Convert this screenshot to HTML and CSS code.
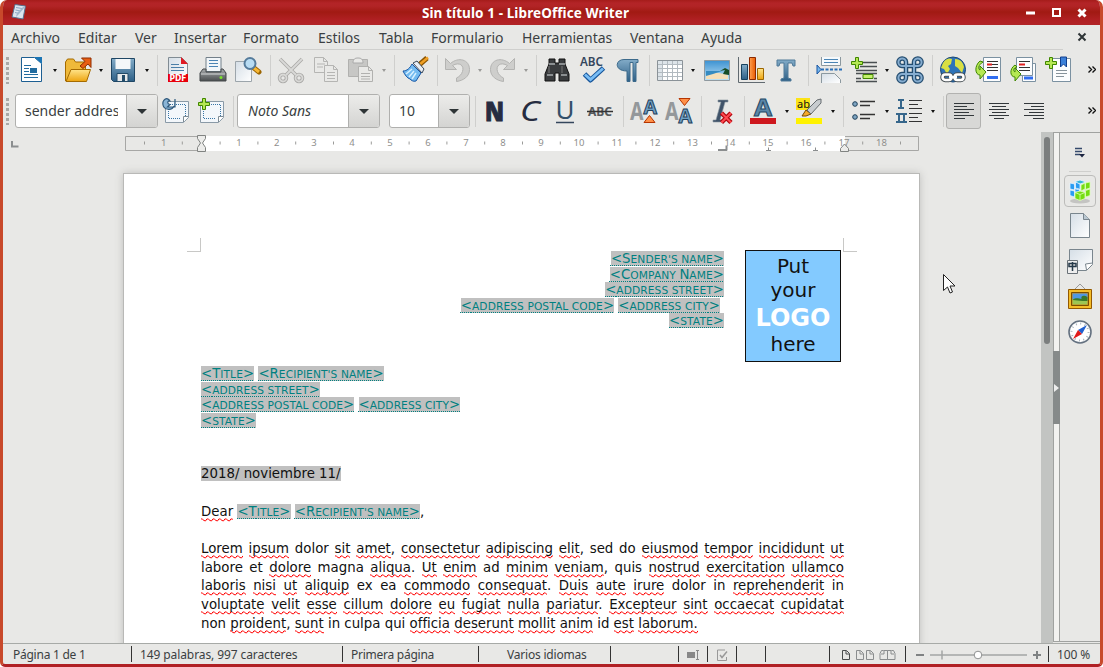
FILE: index.html
```html
<!DOCTYPE html>
<html lang="es">
<head>
<meta charset="utf-8">
<title>Sin título 1 - LibreOffice Writer</title>
<link rel="stylesheet" href="styles.css">
</head>
<body>
<svg width="0" height="0" class="defs">
  <defs>
    <linearGradient id="gBlue" x1="0" y1="0" x2="0" y2="1"><stop offset="0" stop-color="#83acc8"/><stop offset="1" stop-color="#2d5f86"/></linearGradient>
    <linearGradient id="gPage" x1="0" y1="0" x2="1" y2="1"><stop offset="0" stop-color="#d5dee6"/><stop offset="1" stop-color="#fff"/></linearGradient>
    <linearGradient id="gGold" x1="0" y1="0" x2="0" y2="1"><stop offset="0" stop-color="#ffe48a"/><stop offset="1" stop-color="#eda410"/></linearGradient>
    <linearGradient id="gOrange" x1="0" y1="0" x2="1" y2="0"><stop offset="0" stop-color="#ffa050"/><stop offset="1" stop-color="#e85a00"/></linearGradient>
    <linearGradient id="gMetal" x1="0" y1="0" x2="0" y2="1"><stop offset="0" stop-color="#a8abad"/><stop offset="1" stop-color="#4b4e50"/></linearGradient>
    <linearGradient id="gSky" x1="0" y1="0" x2="0" y2="1"><stop offset="0" stop-color="#3c92d2"/><stop offset="1" stop-color="#bfe2f5"/></linearGradient>
  </defs>
</svg>
<div class="window">
  <header class="titlebar">
    <svg class="app-icon" viewBox="0 0 16 16"><path d="M4 .5 14.500 2l-2.500 13L1 13z" fill="#dbe5ee" stroke="#55708f"/><path d="m5 3.500 6 1M4.500 6l5 1M4 8.500l4 1" stroke="#8aa6c4"/><path d="m14 3-6 7-3 3 1-4 6-6" fill="#9fb6cc"/></svg>
    <span class="title">Sin título 1 - LibreOffice Writer</span>
    <svg class="win-buttons" viewBox="0 0 66 16" fill="none" stroke="#fff" stroke-width="2"><path d="M2 8h9" stroke-width="3"/><path d="M29 4h7v7h-7z"/><path d="m54.500 4.500 7 7m0-7-7 7" stroke-width="3"/></svg>
  </header>
  <nav class="menubar">
    <span>Archivo</span><span>Editar</span><span>Ver</span><span>Insertar</span><span>Formato</span><span>Estilos</span><span>Tabla</span><span>Formulario</span><span>Herramientas</span><span>Ventana</span><span>Ayuda</span>
    <svg viewBox="0 0 10 10"><path d="m1.500 1.500 7 7m0-7-7 7" stroke="#2e3436" stroke-width="2"/></svg>
  </nav>
  <div class="rule"></div>

  <div class="toolbar">
    <i class="grip"></i>
    <b class="slot"><svg viewBox="0 0 28 28"><path d="M3.500 1.500h13l7 6v18h-20z" fill="#fff" stroke="#1d5f92"/><path d="m16 1 8 7V1z" fill="#1b75b5"/><path d="M6 9.500h7M6 12.500h5M6 15.500h5M6 18.500h14M6 21.500h14" stroke="#236c9f"/><path d="M12 12h7v5h-7z" fill="#236c9f"/></svg></b><i class="arr"></i>
    <b class="slot"><svg viewBox="0 0 28 28"><path d="M1.500 25V6l2-3h6l2 3h10v7" fill="#efb93a" stroke="#a56b00"/><path d="m2 25.500 5-12h19.500l-4 12z" fill="url(#gGold)" stroke="#a56b00"/><path d="m16 10 5-4.500-3.500-3.500h9.500v9.500l-3-3.500-5 4.500z" fill="#e85e12" stroke="#8f2d00"/></svg></b><i class="arr"></i>
    <b class="slot"><svg viewBox="0 0 28 28"><path d="M1.500 2.500h23v23h-21l-2-2z" fill="url(#gBlue)" stroke="#1f4664"/><path d="M5.500 3h15v10h-15z" fill="#f4f7f9"/><path d="M7 17.500h11v8H7z" fill="#e6e9ea" stroke="#234b68"/><path d="M12 19h3v6h-3z" fill="#234b68"/></svg></b><i class="arr"></i>
    <i class="sep"></i>
    <b class="slot"><svg viewBox="0 0 28 28"><path d="M4.500 1.500h13l6 6v18h-19z" fill="url(#gPage)" stroke="#818c94"/><path d="m17 1 7 7h-7z" fill="#e01b24"/><path d="M7 8.500h8M7 11.500h13M7 14.500h13" stroke="#4b7fa8"/><path d="M4 18h20v8H4z" fill="#e8000b"/><text x="14" y="25" text-anchor="middle" textLength="17" lengthAdjust="spacingAndGlyphs" class="t-pdf">PDF</text></svg></b>
    <b class="slot"><svg viewBox="0 0 28 28"><path d="M7 1.500h15v14H7z" fill="#f2f6f9" stroke="#73808a"/><path d="M10 4.500h9M10 7.500h9M10 10.500h9" stroke="#4b84b4"/><path d="m4 13-3 4v8h26v-8l-3-4h-2v3H7v-3z" fill="url(#gMetal)" stroke="#44484a"/><path d="M2 18h24" stroke="#d2d5d6"/><circle cx="22" cy="21.500" r="1.500" fill="#79e22a"/></svg></b>
    <b class="slot"><svg viewBox="0 0 28 28"><path d="M1.500 5.500h16v20h-16z" fill="url(#gPage)" stroke="#9ca5ab"/><path d="m20 12 5 4" stroke="#9c6500" stroke-width="5" stroke-linecap="round"/><path d="m20 12 5 4" stroke="#f7b733" stroke-width="3"/><circle cx="16" cy="7.500" r="5.500" fill="#b8dcf3" stroke="#557b9b" stroke-width="2"/></svg></b>
    <i class="sep"></i>
    <b class="slot"><svg viewBox="0 0 28 28" fill="none"><g stroke="#aaa9a7" stroke-width="3.500"><path d="M3 3 19 19M25 3 9 19"/><circle cx="6" cy="22" r="3.500"/><circle cx="22" cy="22" r="3.500"/></g><g stroke="#d9d9d7" stroke-width="1.800"><path d="M3 3 19 19M25 3 9 19"/><circle cx="6" cy="22" r="3.500"/><circle cx="22" cy="22" r="3.500"/></g></svg></b>
    <b class="slot"><svg viewBox="0 0 28 28"><g fill="#e9e9e7" stroke="#b5b5b3"><path d="M2.500 1.500h9l4 4v11h-13zM11.500 1.500v4h4M5 8h8M5 11h6"/><path d="M12.500 9.500h9l4 4v12h-13zM21.500 9.500v4h4M15 16.500h8M15 19.500h8M15 22.500h8"/></g></svg></b>
    <b class="slot"><svg viewBox="0 0 28 28"><path d="M1.500 3.500h19v17h-19z" fill="#c7c7c5" stroke="#b1b1af"/><path d="M6 7c0-4 2-5 5-5s5 1 5 5z" fill="#e8e8e6" stroke="#aaa"/><path d="M11.500 10.500h10l4 4v11h-14zM21.500 10.500v4h4M14 17.500h9M14 20.500h9M14 23h9" fill="#e9e9e7" stroke="#b1b1af"/></svg></b><i class="arr dim"></i>
    <i class="sep"></i>
    <b class="slot"><svg viewBox="0 0 28 28"><path d="m18 9 8-7" stroke="#8a5300" stroke-width="5"/><path d="m18 9 9-7.500" stroke="#f0a025" stroke-width="2.500"/><path d="m11 8 9 9-5 8c-3 1-5-1-6-2-3-1-5-4-7-8 4 0 7-3 9-7z" fill="#72baf0" stroke="#1957a5"/><path d="m11 13-6 5M13 15l-5 6M15 17l-4 6" stroke="#d7f0ff" stroke-width="1.500"/><path d="m12 7 4-2 7 8-2 4z" fill="#e9eef4" stroke="#39485b"/></svg></b>
    <i class="sep s7"></i>
    <b class="slot"><svg viewBox="0 0 28 28"><path d="M2.500 2.500v11h11l-4-4c7-4 12 0 10 6-1 3-3 5-6 6.500v3.500c7-1 13-5 13-12 0-10-11-13-19-6z" fill="#cececc" stroke="#b4b4b2"/></svg></b><i class="arr dim"></i>
    <b class="slot"><svg viewBox="0 0 28 28"><path d="M25.500 2.500v11h-11l4-4c-7-4-12 0-10 6 1 3 3 5 6 6.500v3.500c-7-1-13-5-13-12 0-10 11-13 19-6z" fill="#cececc" stroke="#b4b4b2"/></svg></b><i class="arr dim"></i>
    <i class="sep"></i>
    <b class="slot"><svg viewBox="0 0 28 28"><path d="M6 3h6v4h4V3h6v5l4 10v7H16v-8h-4v8H2v-7L6 8z" fill="#3a3c3e" stroke="#111"/><path d="M6 8h6M16 8h6M4 19h6M18 19h6" stroke="#a7abad" stroke-width="1.500"/><path d="M6 10v7M19 10v7" stroke="#777"/></svg></b>
    <b class="slot"><svg viewBox="0 0 28 28"><text x="13.500" y="10" text-anchor="middle" textLength="23" lengthAdjust="spacingAndGlyphs" class="t-abc">ABC</text><path d="m6.500 18 6 6L25.500 12" fill="none" stroke="#17559a" stroke-width="5" stroke-linejoin="round"/><path d="m7 18.500 5.500 5L25 12.500" fill="none" stroke="#79bdf5" stroke-width="2.800"/></svg></b>
    <b class="slot"><svg viewBox="0 0 28 28"><path d="M11 3.500h14v3h-2v19h-3v-19h-3v19h-3V15C1 15 2 3.500 11 3.500z" fill="url(#gBlue)" stroke="#3c6a8b"/></svg></b>
    <i class="sep"></i>
    <b class="slot"><svg viewBox="0 0 28 28"><path d="M1.500 4.500h25v20h-25z" fill="#fff" stroke="#8a9298"/><path d="M2 5h24v3H2zM2 8h4v16H2z" fill="#dde4e9"/><path d="M2 8.500h24M2 12.500h24M2 16.500h24M2 20.500h24M6.500 5v19M11.500 5v19M16.500 5v19M21.500 5v19" stroke="#b2bac0"/></svg></b><i class="arr"></i>
    <b class="slot"><svg viewBox="0 0 28 28"><path d="M2.500 4.500h25v20h-25z" fill="url(#gSky)" stroke="#8f999f"/><path d="M4 17c8-1 15 0 22 2v4H4z" fill="#f5dfb8"/><path d="M4 15h16l-9 3-7 2z" fill="#358bc1"/><path d="m21 18 2-4-5 1 5-3 4 2v5z" fill="#184d26"/></svg></b>
    <b class="slot"><svg viewBox="0 0 28 28"><path d="M1.500 1v25.500H28" fill="none" stroke="#616a70"/><path d="M4.500 8.500h6v15h-6z" fill="url(#gBlue)" stroke="#17415e"/><path d="M12.500 1.500h6v22h-6z" fill="url(#gOrange)" stroke="#8c2900"/><path d="M20.500 12.500h6v11h-6z" fill="url(#gGold)" stroke="#9b6500"/></svg></b>
    <b class="slot"><svg viewBox="0 0 28 28"><path d="M5 4h18v6h-2l-1-3h-4v15l3 1v2H9v-2l3-1V7H8l-1 3H5z" fill="url(#gBlue)" stroke="#507b99"/></svg></b>
    <i class="sep"></i>
    <b class="slot"><svg viewBox="0 0 28 28"><path d="M6.500 1v8.500h19V1" fill="#f5f9fc" stroke="#8b989f"/><path d="M9 3.500h14M9 6.500h14" stroke="#4a85b5"/><path d="M6.500 27v-9.500h13l6 6V27" fill="url(#gPage)" stroke="#8b989f"/><path d="M6 13.500h22" stroke="#286fb8" stroke-width="2" stroke-dasharray="3 1.500"/><path d="m2 9 4 4.500L2 18z" fill="#75b7ef" stroke="#1954a0"/></svg></b>
    <b class="slot"><svg viewBox="0 0 28 28"><path d="M13 6.500h14M10 10.500h17M6 14.500h21M6 17.500h21M6 22.500h5M24 22.500h3M6 25.500h21" stroke="#4a4f52" stroke-width="1.500"/><path d="M13 18.500h10v4H13z" fill="#c4f16c" stroke="#408500"/><path class="plus" d="M5.500 1.500h3v4h4v3h-4v4h-3v-4h-4v-3h4z"/></svg></b><i class="arr"></i>
    <b class="slot"><svg viewBox="0 0 28 28" fill="none"><path d="M10 5.500V22a3.800 3.800 0 1 1-4-4h16a3.800 3.800 0 1 1-4 4V6a3.800 3.800 0 1 1 4 4H6a3.800 3.800 0 1 1 4-4" stroke="#244d70" stroke-width="4.500"/><path d="M10 5.500V22a3.800 3.800 0 1 1-4-4h16a3.800 3.800 0 1 1-4 4V6a3.800 3.800 0 1 1 4 4H6a3.800 3.800 0 1 1 4-4" stroke="#86add0" stroke-width="2"/></svg></b>
    <i class="sep"></i>
    <b class="slot"><svg viewBox="0 0 28 28"><circle cx="14" cy="13.500" r="12.500" fill="#2e73b8" stroke="#1a4673"/><path d="M4 7c3-5 7-5 9-4l-1 5-3 2 2 3-3 5-3-5-3-1zM16 3c6 0 8 4 9 8l-2 6-4-5-3-2z" fill="#d9df43"/><g fill="none" stroke="#4b5357" stroke-width="4.500"><rect x="3.500" y="18.500" width="9" height="5.500" rx="2.700"/><rect x="15.500" y="18.500" width="9" height="5.500" rx="2.700"/></g><g fill="none" stroke="#fff" stroke-width="2.500"><rect x="3.500" y="18.500" width="9" height="5.500" rx="2.700"/><rect x="15.500" y="18.500" width="9" height="5.500" rx="2.700"/><path d="M10 21.200h8"/></g></svg></b>
    <b class="slot"><svg viewBox="0 0 28 28"><path d="M9.500 1.500h17v24h-17z" fill="#fcfdfe" stroke="#7b91a1"/><path d="M13 5.500h11M13 11.500h11M13 14.500h11" stroke="#333"/><path d="M13 8.500h5" stroke="#e12020" stroke-width="2"/><path d="M18 8.500h6" stroke="#333"/><path d="M13 21.500h11" stroke="#2f6df0" stroke-width="3"/><path class="plus" d="M6 5c-6 5-5 14 0 14v4l6-7-6-6v4c-2-1-2-5 3-8z"/></svg></b>
    <b class="slot"><svg viewBox="0 0 28 28"><path d="M13.500 7.500h13v18h-13z" fill="#fcfdfe" stroke="#7b91a1"/><path d="M15 22h9" stroke="#2f6df0" stroke-width="3"/><path d="M7.500 1.500h16v18h-16z" fill="#fcfdfe" stroke="#7b91a1"/><path d="M10 5.500h11M10 11.500h11M10 14.500h11" stroke="#333"/><path d="M10 8.500h6" stroke="#e12020" stroke-width="2"/><path class="plus" d="M6 9c-6 4-5 12 0 12v4l6-7-6-6v4c-2-1-2-4 2-5z"/></svg></b>
    <b class="slot"><svg viewBox="0 0 28 28"><path d="M8.500 2.500h18v23h-18z" fill="#fcfdfe" stroke="#7b91a1"/><path d="M12 14.500h11M12 17.500h11M12 20.500h8" stroke="#87939b"/><path d="M16.500 1v10l3-3 3 3V1z" fill="#3b80d8" stroke="#123f8d"/><path class="plus" d="M5.500 1.500h3v4h4v3h-4v4h-3v-4h-4v-3h4z"/></svg></b>
    <svg class="more" viewBox="0 0 8 8"><path d="m.500.500 3 3-3 3m4-6 3 3-3 3" fill="none" stroke="#111" stroke-width="1.400"/></svg>
  </div>

  <div class="toolbar second">
    <i class="grip"></i>
    <div class="combo c1"><span>sender addres</span><em></em></div>
    <b class="slot"><svg viewBox="0 0 28 28"><path d="M3.500 4.500h23v16l-5 5h-18z" fill="#f3f7fb" stroke="#8a9aa7"/><path d="M6 7.500h17.500v12M6.500 8v13.500H19" fill="none" stroke="#3875a5" stroke-dasharray="1 1"/><path d="M21.500 25v-5.500h5" fill="#fff" stroke="#7e8b94"/><path d="M13 2v8H5.500l2.500-2.500C5 7 5 3.500 8 4 5-1 0 3 1 8c1 5 9 6 11 1" fill="#89b4d6" stroke="#2e587b" stroke-width="1.200"/></svg></b>
    <b class="slot"><svg viewBox="0 0 28 28"><path d="M3.500 4.500h23v16l-5 5h-18z" fill="#f3f7fb" stroke="#8a9aa7"/><path d="M6 7.500h17.500v12M6.500 8v13.500H19" fill="none" stroke="#3875a5" stroke-dasharray="1 1"/><path d="M21.500 25v-5.500h5" fill="#fff" stroke="#7e8b94"/><path class="plus" d="M5.500 1.500h3v4h4v3h-4v4h-3v-4h-4v-3h4z"/></svg></b>
    <i class="sep s9"></i>
    <div class="combo c2"><span>Noto Sans</span><em></em></div>
    <div class="combo c3"><span>10</span><em></em></div>
    <i class="sep"></i>
    <b class="slot"><svg viewBox="0 0 28 28"><text x="12.500" y="24" text-anchor="middle" textLength="19" lengthAdjust="spacingAndGlyphs" class="t-n">N</text></svg></b>
    <b class="slot"><svg viewBox="0 0 28 28"><text x="13" y="24" text-anchor="middle" textLength="20" lengthAdjust="spacingAndGlyphs" class="t-c">C</text></svg></b>
    <b class="slot"><svg viewBox="0 0 28 28"><text x="13" y="22" text-anchor="middle" textLength="19" lengthAdjust="spacingAndGlyphs" class="t-u">U</text><path d="M4 25.500h18" stroke="#34465c" stroke-width="1.500"/></svg></b>
    <b class="slot"><svg viewBox="0 0 28 28"><text x="13" y="19" text-anchor="middle" textLength="24" lengthAdjust="spacingAndGlyphs" class="t-s">ABC</text><path d="M0 14.500h26" stroke="#333" stroke-width="1.500"/></svg></b>
    <i class="sep"></i>
    <b class="slot"><svg viewBox="0 0 28 28"><text x="0" y="23" textLength="13.500" lengthAdjust="spacingAndGlyphs" class="t-big">A</text><text x="13.500" y="16.500" textLength="13.500" lengthAdjust="spacingAndGlyphs" class="t-sm">A</text><path d="m14 25.500 5.500-7 5.500 7z" fill="#ff9048" stroke="#b53400"/></svg></b>
    <b class="slot"><svg viewBox="0 0 28 28"><text x="0" y="23" textLength="13.500" lengthAdjust="spacingAndGlyphs" class="t-big">A</text><text x="13.500" y="26" textLength="13.500" lengthAdjust="spacingAndGlyphs" class="t-sm">A</text><path d="m14 1.500 5.500 7 5.500-7z" fill="#ff9048" stroke="#b53400"/></svg></b>
    <i class="sep"></i>
    <b class="slot"><svg viewBox="0 0 28 28"><path d="M10 3h10v2h-3l-5 18h3v2H5v-2h3l5-18h-3z" fill="#3f5268" stroke="#8895a0" stroke-width=".6"/><path d="m13.500 16 9.500 9.500m0-9.500-9.500 9.500" stroke="#b1050b" stroke-width="4.500"/><path d="m13.500 16 9.500 9.500m0-9.500-9.500 9.500" stroke="#ff4a50" stroke-width="2"/></svg></b>
    <i class="sep s7"></i>
    <b class="slot"><svg viewBox="0 0 28 28"><text x="4" y="19" textLength="18" lengthAdjust="spacingAndGlyphs" class="t-a">A</text><path d="M0 21h26v6H0z" fill="#ce181e"/></svg></b><i class="arr"></i>
    <b class="slot"><svg viewBox="0 0 28 28"><path d="M0 1h14v12H0z" fill="#fce316"/><text x="1" y="11" class="t-hl">ab</text><path d="M0 21h26v6H0z" fill="#fff200"/><path d="m6 19 4-6 5 4-5 2z" fill="#f5aa2b" stroke="#744900"/><path d="M11 13 21 3l4-1v4L15 17z" fill="#c8cccf" stroke="#666c70"/></svg></b><i class="arr"></i>
    <i class="sep"></i>
    <b class="slot"><svg viewBox="0 0 28 28"><circle cx="5" cy="7" r="2.300" class="dot"/><circle cx="5" cy="20" r="2.300" class="dot"/><path d="M10 4.500h15M10 8.500h10M10 17.500h15M10 21.500h10" stroke="#333" stroke-width="1.400"/></svg></b><i class="arr"></i>
    <b class="slot"><svg viewBox="0 0 28 28"><path d="M2 3h6M2 11h6M5 3v8M0 17h11M0 25h11M3 17v8M8 17v8" stroke="#36668b" stroke-width="2"/><path d="M13 3.500h13M13 7.500h9M13 11.500h13M13 16.500h13M13 20.500h9M13 24.500h13" stroke="#333"/></svg></b><i class="arr"></i>
    <i class="sep"></i>
    <b class="slot on"><svg viewBox="0 0 28 28"><path d="M4 6.500h20M4 9.500h13M4 12.500h20M4 15.500h15M4 18.500h20M4 21.500h11" class="ln"/></svg></b>
    <b class="slot"><svg viewBox="0 0 28 28"><path d="M4 6.500h20M7 9.500h14M4 12.500h20M7 15.500h14M4 18.500h20M9 21.500h10" class="ln"/></svg></b>
    <b class="slot"><svg viewBox="0 0 28 28"><path d="M4 6.500h20M11 9.500h13M4 12.500h20M9 15.500h15M4 18.500h20M13 21.500h11" class="ln"/></svg></b>
    <svg class="more" viewBox="0 0 8 8"><path d="m.500.500 3 3-3 3m4-6 3 3-3 3" fill="none" stroke="#111" stroke-width="1.400"/></svg>
  </div>

  <main class="work">
    <section class="canvas">
      <svg class="ruler" viewBox="0 1 1038 29">
        <path d="M9 10v5.500h6.500" fill="none" stroke="#8b8e8f" stroke-width="2"/>
        <path d="M198 5h644v15H198z" fill="#fff"/>
        <path d="M198 5.500h-75.500v14H198M842 5.500h73.500v14H842" fill="none" stroke="#a7a7a5"/>
        <path d="M141 12h775" stroke="#9b9b99" stroke-width="3" stroke-dasharray="1 36.800"/>
        <g class="nums">
          <text x="160.700" y="15">1</text><text x="236" y="15">1</text><text x="273.600" y="15">2</text><text x="311" y="15">3</text><text x="349" y="15">4</text><text x="387" y="15">5</text><text x="425" y="15">6</text><text x="463" y="15">7</text><text x="500" y="15">8</text><text x="538" y="15">9</text><text x="576" y="15">10</text><text x="614" y="15">11</text><text x="652" y="15">12</text><text x="689.500" y="15">13</text><text x="727" y="15">14</text><text x="765" y="15">15</text><text x="803" y="15">16</text><text x="841" y="15">17</text><text x="878.500" y="15">18</text>
        </g>
        <path d="M194.500 4.500h8v3l-3 4.500 3 4.500v4h-8v-4l3-4.500-3-4.500zM837.500 20.500v-3l4-4.500 4 4.500v3z" fill="#ececea" stroke="#808381"/>
        <path d="M715 19h9M723.500 14.500v5" stroke="#8b8e8f" stroke-width="2"/><path d="M763 19.500h5M765.500 16.500v3M810 19.500h5M812.500 16.500v3" stroke="#8b8e8f"/>
      </svg>
      <article class="page">
        <i class="corner tl"></i><i class="corner tr"></i>
        <div class="letterhead">
          <div class="sender">
            <div><u>&lt;S<s>ENDER'S NAME</s>&gt;</u></div>
            <div><u>&lt;C<s>OMPANY </s>N<s>AME</s>&gt;</u></div>
            <div><u>&lt;<s>ADDRESS STREET</s>&gt;</u></div>
            <div class="city"><u>&lt;<s>ADDRESS POSTAL CODE</s>&gt;</u> <u>&lt;<s>ADDRESS CITY</s>&gt;</u></div>
            <div><u>&lt;<s>STATE</s>&gt;</u></div>
          </div>
          <div class="logo"><span>Put</span><span>your</span><strong>LOGO</strong><span>here</span></div>
        </div>
        <div class="recipient">
          <div><u>&lt;T<s>ITLE</s>&gt;</u> <u>&lt;R<s>ECIPIENT'S NAME</s>&gt;</u></div>
          <div><u>&lt;<s>ADDRESS STREET</s>&gt;</u></div>
          <div><u>&lt;<s>ADDRESS POSTAL CODE</s>&gt;</u> <u>&lt;<s>ADDRESS CITY</s>&gt;</u></div>
          <div><u>&lt;<s>STATE</s>&gt;</u></div>
        </div>
        <div class="date"><mark>2018/ noviembre 11/</mark></div>
        <div class="dear"><q>Dear</q> <u>&lt;T<s>ITLE</s>&gt;</u> <u>&lt;R<s>ECIPIENT'S NAME</s>&gt;</u>,</div>
        <div class="body">
          <p><q>Lorem</q> <q>ipsum</q> dolor <q>sit</q> <q>amet</q>, <q>consectetur</q> <q>adipiscing</q> <q>elit</q>, sed do <q>eiusmod</q> <q>tempor</q> <q>incididunt</q> <q>ut</q></p>
          <p>labore et <q>dolore</q> magna <q>aliqua</q>. <q>Ut</q> <q>enim</q> ad <q>minim</q> <q>veniam</q>, quis <q>nostrud</q> <q>exercitation</q> <q>ullamco</q></p>
          <p><q>laboris</q> <q>nisi</q> <q>ut</q> <q>aliquip</q> ex ea <q>commodo</q> <q>consequat</q>. <q>Duis</q> <q>aute</q> <q>irure</q> dolor in <q>reprehenderit</q> in</p>
          <p><q>voluptate</q> <q>velit</q> <q>esse</q> <q>cillum</q> <q>dolore</q> <q>eu</q> <q>fugiat</q> <q>nulla</q> <q>pariatur</q>. <q>Excepteur</q> <q>sint</q> <q>occaecat</q> <q>cupidatat</q></p>
          <p class="last">non <q>proident</q>, <q>sunt</q> in culpa qui <q>officia</q> <q>deserunt</q> <q>mollit</q> <q>anim</q> id <q>est</q> <q>laborum.</q></p>
        </div>
      </article>
      <svg class="pointer" viewBox="0 0 13 21"><path d="M1.500 1.500v16l4-3.500 2.500 6 2.500-1-2.500-6h5z" fill="#fff" stroke="#222"/></svg>
    </section>
    <div class="scroll"><i></i></div>
    <div class="splitter"><i></i></div>
    <aside class="sidebar">
      <svg class="menu-ic" viewBox="0 0 12 12"><path d="M1 1.500h7M1 4.500h7M1 7.500h5" stroke="#34496b" stroke-width="1.300"/><path d="M5 7h6L8 10.500z" fill="#1b2440"/></svg>
      <i class="line"></i>
      <b class="side on"><svg viewBox="0 0 28 28"><ellipse cx="14" cy="24" rx="10" ry="2.500" fill="#c4c4c2"/><g stroke="#e4f4ff" stroke-width=".8" fill="#2a9df2"><path d="m8 5 6-2 6 2-6 2z" fill="#35b6d8"/><path d="m4 6 4.500 1v6L4 12zM9.500 5l4.500 2v6l-4.500-1zM4 13l4.500 1v6L4 18.500zM9 11l4.500 1v3L9 15z"/></g><g stroke="#dcffb8" stroke-width=".8" fill="#75dc12"><path d="m15 8 4-2v6l-4 2zM19.500 6 24 5v6l-4.500 1.500zM19.500 13.500 24 12v6.500l-4.500 1.500z"/><path d="m9 15.500 5-1.500 5 1.500v6L14 23.500l-5-2z"/><path d="m9 15.500 5 2 5-2M14 17.500v6" fill="none"/></g></svg></b>
      <b class="side"><svg viewBox="0 0 28 28"><path d="M4.500 1.500h13l6 6v18h-19z" fill="url(#gPage)" stroke="#79858d"/><path d="M17.500 1.500v6h6" fill="#b9c7d1" stroke="#79858d"/></svg></b>
      <b class="side"><svg viewBox="0 0 28 28"><path d="M3.500 1.500h23v15l-6 6h-17z" fill="url(#gPage)" stroke="#79858d"/><path d="m20.500 22-1-6 7-1" fill="#fff" stroke="#79858d"/><path d="M1.500 12.500h10v13h-10z" fill="#eee" stroke="#697177"/><path d="M3 15.500h7v3H3zM6.500 14v9" fill="#ddd" stroke="#263a4a" stroke-width="1.500"/></svg></b>
      <b class="side"><svg viewBox="0 0 28 28"><path d="m9 6 5-5 5 5" fill="none" stroke="#999"/><path d="M2.500 6.500h23v19h-23z" fill="#f4bd28" stroke="#935900"/><path d="M5.500 9.500h17v13h-17z" fill="#c98517" stroke="#7b4e00"/><path d="M6.500 10.500h15v6h-15z" fill="#4f98e3"/><path d="M6.500 16h15v5.500h-15z" fill="#9cc653"/><path d="M6.500 17c4-3 6-1 9-1-1-4 3-4 6-2v4h-5z" fill="#39782a"/></svg></b>
      <b class="side"><svg viewBox="0 0 28 28"><circle cx="14" cy="14" r="11" fill="#fff" stroke="#647180" stroke-width="1.600"/><circle cx="14" cy="14" r="8.500" fill="none" stroke="#a8b2bb" stroke-width="2" stroke-dasharray="1 3.450"/><path d="m21 7-5 9-4-4z" fill="#1f5fd0"/><path d="m7 21 5-9 4 4z" fill="#e21b1b"/></svg></b>
    </aside>
  </main>

  <footer class="status">
    <span class="f1">Página 1 de 1</span><span class="f2">149 palabras, 997 caracteres</span><span class="f3">Primera página</span><span class="f4">Varios idiomas</span><span></span>
    <span class="ctr"><svg viewBox="0 0 14 12"><path d="M1 3h8v6H1z" fill="#888"/><path d="M10 1.500h3M10 10.500h3M11.500 2v8" stroke="#888"/></svg></span>
    <span class="ctr"><svg viewBox="0 0 14 12"><path d="M10 1H2.500v10.500h9V8" fill="none" stroke="#999"/><path d="m5 6 2 2.500 5-6" fill="none" stroke="#999" stroke-width="1.500"/></svg></span>
    <span></span><span></span>
    <span class="views"><svg viewBox="0 0 56 12" fill="none" stroke="#8a8d8e"><path d="M1.500 1.500h4l3 3v6h-7zM5 2v3h3" stroke="#4a4d4e"/><path d="M15.500 1.500h4l3 3v6h-7zM19 2v3h3M25.500 1.500h4l3 3v6h-7zM29 2v3h3M42.500 1.500h-2l-1.500 3v6h7.500v-9zM50.500 1.500h2l1.500 3v6h-7.500v-9zM43 2v3h-3M50 2v3h3"/></svg></span>
    <span class="zoom"><svg viewBox="0 0 124 12"><path d="M0 6h8M117 6h8M121 2v8" stroke="#7f8283" stroke-width="2"/><path d="M14 6h97M26 1.500v9" stroke="#a3a5a5" stroke-width="1.500"/><circle cx="62" cy="6" r="3.800" fill="#fff" stroke="#8f9191"/></svg></span>
    <span class="pct">100 %</span>
  </footer>
</div>
</body>
</html>
```
FILE: styles.css
```css
* { box-sizing: border-box; }
body { margin: 0; background: #fff; font-family: "Noto Sans", sans-serif; color: #3b3f42; }
.defs { position: absolute; }
.window {
  width: 1103px; height: 667px; overflow: hidden;
  display: flex; flex-direction: column;
  border: solid #c8492b; border-width: 0 3px 3px; border-bottom-color: #b02024;
  border-radius: 7px 7px 5px 5px; background: #e8e8e6;
}
.titlebar {
  flex: none; height: 25px; margin: 0 -3px; padding: 0 13px 0 11px;
  display: flex; align-items: center; justify-content: space-between;
  background: linear-gradient(#a51c1a 0, #b32427 3px, #b22426 6px, #a11a13 12px, #b02023 20px, #b22427 25px);
}
.app-icon { width: 16px; height: 16px; margin-bottom: 2px; }
.title { color: #fff; font-weight: 700; font-size: 13.5px; letter-spacing: .1px; white-space: nowrap; }
.win-buttons { width: 66px; height: 16px; }
.menubar {
  flex: none; height: 24px; padding-left: 8px; display: grid; align-items: center;
  grid-template-columns: 67px 57px 39px 69px 75px 61px 52px 91px 108px 71px 376px 10px;
  font-size: 14px; line-height: 24px; white-space: nowrap;
}
.menubar span { padding-top: 2px; height: 24px; line-height: 22px; }
.menubar svg { width: 10px; height: 10px; }
.rule { flex: none; width: 1061px; height: 1px; margin-left: -1px; margin-right: auto; background: #cfcfcd; }
.toolbar { flex: none; height: 40px; display: flex; align-items: center; padding-left: 3px; }
.second { height: 42px; }
.grip { width: 3px; height: 27px; margin-right: 5px; background: repeating-linear-gradient(#a9a9a7 0 3px, transparent 3px 5px); }
.slot { flex: none; width: 35px; height: 36px; display: grid; place-items: center; }
.slot svg { width: 28px; height: 28px; overflow: visible; }
.slot.on { background: #d8d8d6; border: 1px solid #b2b2b0; border-radius: 3px; }
.arr { flex: none; width: 11px; display: grid; place-items: center; }
.arr::before { content: ""; border: solid transparent; border-width: 3px 2.5px 0; border-top-color: #111; }
.arr.dim::before { border-top-color: #9a9a98; }
.sep { flex: none; width: 8px; height: 31px; background: linear-gradient(#cfcfcd, #cfcfcd) 5px 0 / 1px 100% no-repeat; }
.s7 { width: 7px; }
.s9 { width: 9px; }
.more { width: 8px; height: 8px; margin-left: auto; margin-right: 4px; }
.plus { fill: #b5e853; stroke: #3f8600; }
.dot { fill: #7fa5c2; stroke: #1c3e58; }
.ln { stroke: #33383b; fill: none; }
.t-pdf { font: 700 8px "DejaVu Sans", sans-serif; fill: #fff; }
.t-abc { font: 600 12px "Noto Sans", sans-serif; fill: #34465c; }
.t-n { font: 900 27px "Noto Sans", sans-serif; fill: #262c40; stroke: #262c40; }
.t-c { font: italic 27px "Noto Sans", sans-serif; fill: #262c40; }
.t-u { font: 26px "Noto Sans", sans-serif; fill: #34506a; }
.t-s { font: 700 12px "Noto Sans", sans-serif; fill: #55595d; }
.t-big { font: 700 25px "Noto Sans", sans-serif; fill: #94989b; }
.t-sm { font: 700 20px "Noto Sans", sans-serif; fill: #6f9fc3; stroke: #1f405c; stroke-width: 1px; }
.t-a { font: 700 24px "Noto Sans", sans-serif; fill: #5b87a8; stroke: #274a67; stroke-width: 1px; }
.t-hl { font: 11px "Noto Sans", sans-serif; fill: #111; }
.combo {
  flex: none; height: 34px; display: flex; overflow: hidden; background: #fff;
  border: 1px solid #b0b0ae; border-radius: 3px; font-size: 14px; line-height: 32px; white-space: nowrap;
}
.combo span { flex: 1; overflow: hidden; padding-left: 9px; }
.combo em {
  width: 31px; display: grid; place-items: center; border-left: 1px solid #b0b0ae;
  background: linear-gradient(#ececea, #d4d4d2);
}
.combo em::before { content: ""; border: solid transparent; border-width: 5px 5px 0; border-top-color: #2e3436; }
.c1 { width: 143px; margin-left: 1px; }
.c1 span { margin-right: 8px; }
.c2 { width: 143px; margin-right: 9px; font-style: italic; }
.c2 span { padding-left: 10px; }
.c3 { width: 81px; }
.work { flex: 1; min-height: 0; display: flex; }
.canvas { flex: none; width: 1038px; overflow: hidden; position: relative; display: flex; flex-direction: column; }
.ruler { flex: none; width: 1038px; height: 29px; display: block; }
.nums { font: 9.500px "Noto Sans", sans-serif; fill: #8f8f8d; text-anchor: middle; stroke: none; }
.page {
  flex: none; width: 797px; height: 500px; margin: 12px 0 0 120px; padding: 77px 0 0 77px; position: relative;
  background: #fff; border: 1px solid #b9b9b7; box-shadow: 0 0 8px #c0c0be;
  font: 13.333px "DejaVu Sans", sans-serif; line-height: 15.6px; color: #111; white-space: nowrap;
}
.corner { position: absolute; top: 64px; width: 14px; height: 14px; border: 1px solid #c8c8c6; border-top: 0; }
.tl { left: 63px; border-left: 0; }
.tr { left: 719px; border-right: 0; }
.letterhead { display: flex; height: 111px; }
.sender { width: 523px; text-align: right; }
.sender div, .recipient div, .date, .dear { height: 15.6px; }
.city { padding-right: 4px; }
u { background: #c0c0c0; color: #008080; text-decoration: underline dotted 1px; text-underline-offset: 2px; text-decoration-skip-ink: none; }
s { font-size: 10.667px; line-height: 0; letter-spacing: .08px; text-decoration: none; }
.logo {
  width: 96px; height: 112px; margin: -1px 0 0 21px; background: #83caff; border: 1px solid #111;
  display: grid; grid-template-rows: 24px 26px 26px 26px; padding-top: 3px; text-align: center;
  font-size: 20px; line-height: 24px;
}
.logo strong { color: #fff; font-size: 24px; line-height: 28px; }
.logo span:last-child { padding-top: 2px; }
.recipient { margin-top: 4px; }
.date { margin-top: 38px; }
mark { background: #c0c0c0; color: #111; }
.dear { margin-top: 22px; }
.body { width: 643px; margin-top: 20.4px; line-height: 18.75px; }
p { margin: 0; text-align: justify; text-align-last: justify; white-space: normal; height: 18.75px; }
p.last { text-align-last: left; white-space: nowrap; }
q {
  quotes: none; padding-bottom: 3px;
  background: url("data:image/svg+xml,%3Csvg xmlns='http://www.w3.org/2000/svg' width='6' height='4'%3E%3Cpath d='M-1 1.500L0 .8Q1.500 .8 3 2.500T6 .8' fill='none' stroke='red'/%3E%3C/svg%3E") left bottom / 6px 4px repeat-x;
}
.pointer { position: absolute; left: 939px; top: 141px; width: 13px; height: 21px; }
.scroll { width: 12px; background: #c2c4c2; padding: 5px 3px; }
.scroll i { display: block; width: 6px; height: 207px; border-radius: 3px; background: #7b7e7e; }
.splitter { width: 7px; border: solid #a0a2a0; border-width: 1px; background: #f2f2f0; margin-bottom: 1px; padding-top: 218px; }
.splitter i { display: grid; place-items: center start; width: 7px; height: 73px; margin-left: -1px; background: #868a8a; }
.splitter i::before { content: ""; margin-left: 1px; border: solid transparent; border-width: 4px 0 4px 5px; border-left-color: #eee; }
.sidebar { flex: 1; display: flex; flex-direction: column; align-items: center; border: solid #a0a2a0; border-width: 1px 0; margin-bottom: 1px; padding-top: 14px; }
.menu-ic { width: 12px; height: 12px; }
.line { width: 22px; height: 1px; margin: 12px 0 3px; background: #cfcfcd; }
.side { width: 32px; height: 32px; margin-bottom: 3.3px; display: grid; place-items: center; }
.side svg { width: 28px; height: 28px; }
.side.on { border: 1px solid #bcbcba; border-radius: 4px; }
.status {
  flex: none; height: 21px; border-top: 1px solid #a7aaa7; display: grid; align-items: center;
  grid-template-columns: 129px 211px 136px 132px 68px 29px 29px 29px 64px 76px 143px 52px;
  font-size: 12px; line-height: 18px; letter-spacing: -.1px; white-space: nowrap;
}
.status span { height: 16px; border-right: 1px solid #333; }
.status svg { display: block; height: 12px; margin-top: 3px; }
.f1 { padding-left: 10px; } .f2, .f3 { padding-left: 8px; } .f4 { padding-left: 28px; letter-spacing: -.2px; }
.f1, .f3 { letter-spacing: -.25px; }
.ctr { display: grid; justify-items: center; } .ctr svg { width: 14px; }
.views { padding-left: 11px; } .views svg { width: 56px; }
.zoom { padding-left: 10px; } .zoom svg { width: 124px; overflow: visible; }
.status .pct { padding-left: 8px; border: 0; }
```
